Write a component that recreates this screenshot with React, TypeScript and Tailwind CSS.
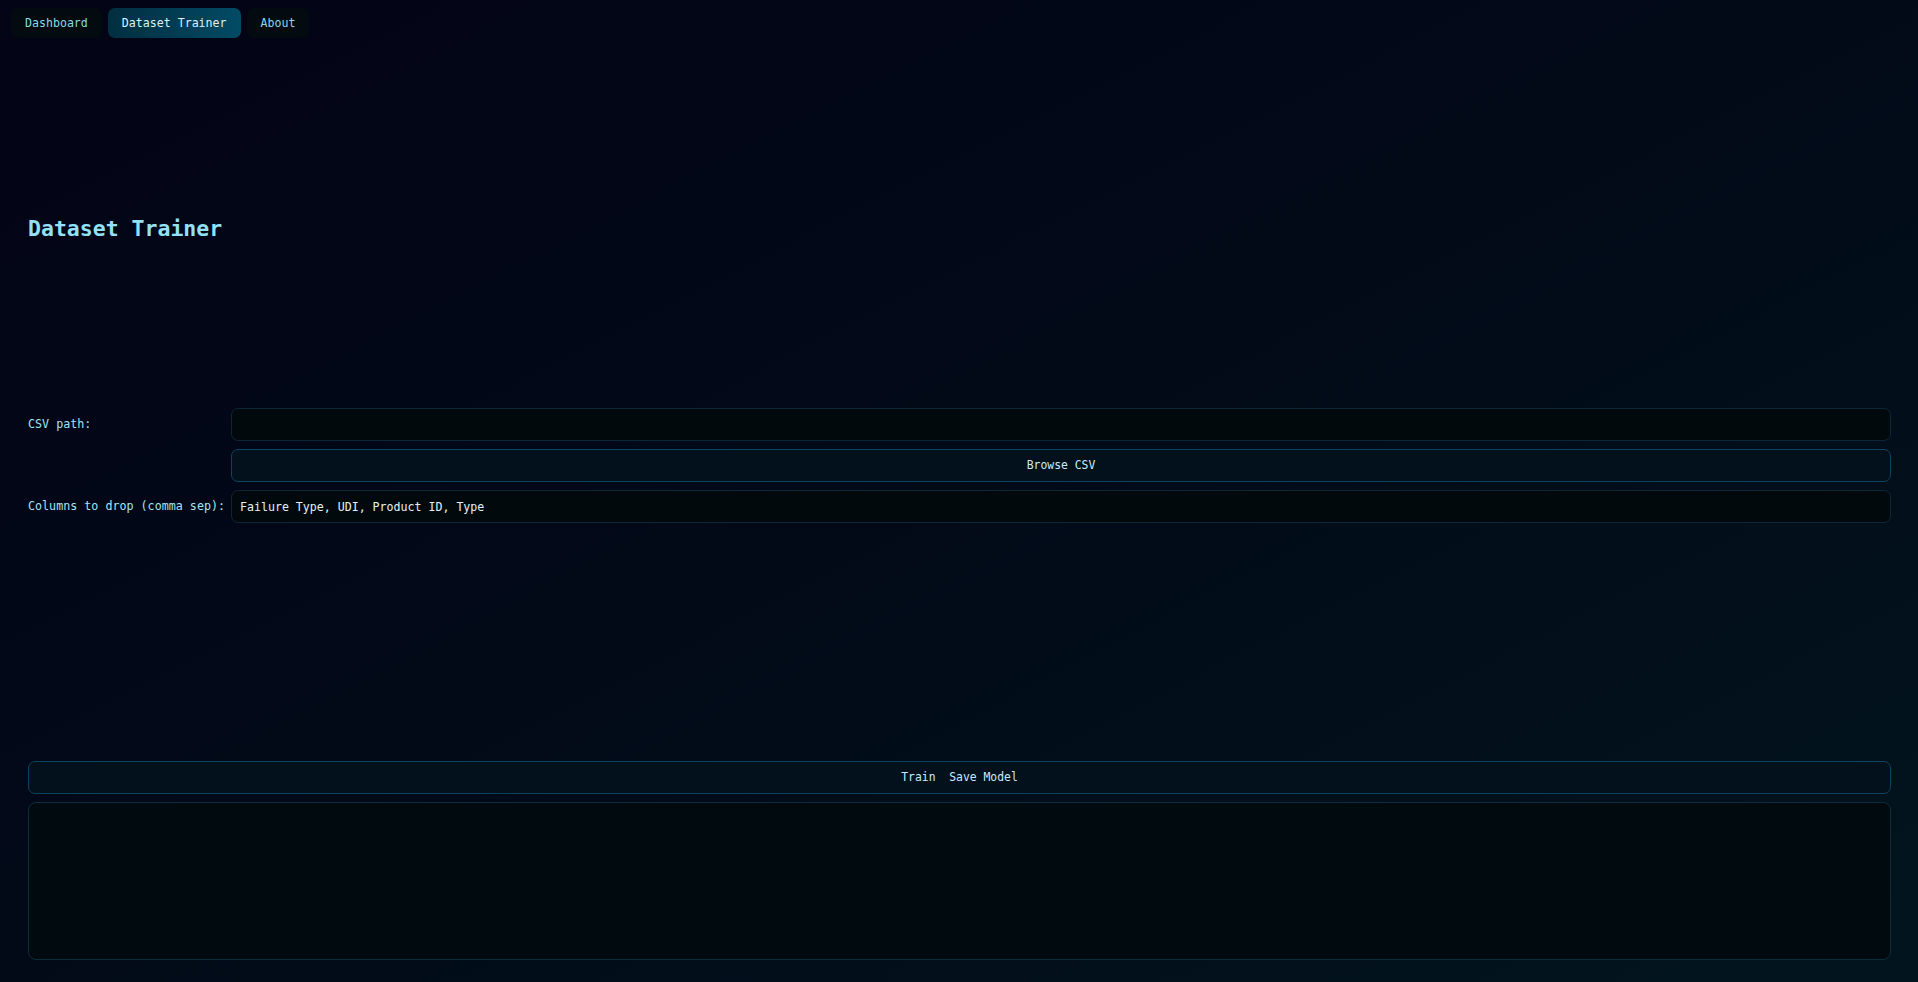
import React from "react";

const mono = { fontFamily: '"DejaVu Sans Mono", "Liberation Mono", monospace' };

function NavTab({ label, active }: { label: string; active?: boolean }) {
  return (
    <button
      className={
        active
          ? "h-[30px] px-[14px] pt-px rounded-[7px] bg-gradient-to-r from-[#022e41] to-[#024b65] text-[#dcf2f6] text-[11.6px]"
          : "h-[30px] px-[14px] pt-px rounded-[7px] bg-[#030a10] text-[#86d9e8] text-[11.6px]"
      }
      style={mono}
    >
      {label}
    </button>
  );
}

function TextField({ value }: { value?: string }) {
  return (
    <div className="h-[33px] flex-1 rounded-[7px] border border-[#0a2737] bg-[#01090d] flex items-center px-[8px] pt-[3px]">
      <span className="text-[11.6px] text-[#e4f1f3] whitespace-pre" style={mono}>
        {value ?? ""}
      </span>
    </div>
  );
}

function ActionButton({ label, className }: { label: string; className?: string }) {
  return (
    <button
      className={
        "h-[33px] w-full rounded-[7px] border border-[#0d4260] bg-[#02111b] text-[#c6ecfb] text-[11.4px] whitespace-pre " +
        (className ?? "")
      }
      style={mono}
    >
      {label}
    </button>
  );
}

export default function App() {
  return (
    <div
      className="h-[982px] w-full flex flex-col bg-gradient-to-br from-[#030416] via-[#020a18] to-[#02151f] overflow-hidden"
      style={mono}
    >
      {/* top tab bar */}
      <div className="flex gap-[6px] pt-[8px] pl-[11px]">
        <NavTab label="Dashboard" />
        <NavTab label="Dataset Trainer" active />
        <NavTab label="About" />
      </div>

      <div className="flex-1 flex flex-col pl-[28px] pr-[27px]">
        <h1 className="mt-[177px] h-[28px] leading-[28px] text-[21.5px] font-bold text-[#92e1f6]">
          Dataset Trainer
        </h1>

        {/* form */}
        <div className="mt-[165px] flex flex-col gap-[8px]">
          <div className="flex items-start">
            <label className="w-[203px] pt-[8px] text-[11.7px] text-[#a4e4f0]">CSV path:</label>
            <TextField />
          </div>
          <div className="flex">
            <div className="w-[203px]" />
            <ActionButton label="Browse CSV" className="flex-1 h-[32px]" />
          </div>
          <div className="flex items-start">
            <label className="w-[203px] pt-[8px] text-[11.7px] text-[#a4e4f0] whitespace-pre">
              Columns to drop (comma sep):
            </label>
            <TextField value="Failure Type, UDI, Product ID, Type" />
          </div>
        </div>

        <div className="mt-[238px]">
          <ActionButton label="Train  Save Model" />
        </div>

        <div className="mt-[8px] h-[158px] rounded-[8px] border border-[#0a2c3c] bg-[#010a0f]" />
      </div>
    </div>
  );
}
